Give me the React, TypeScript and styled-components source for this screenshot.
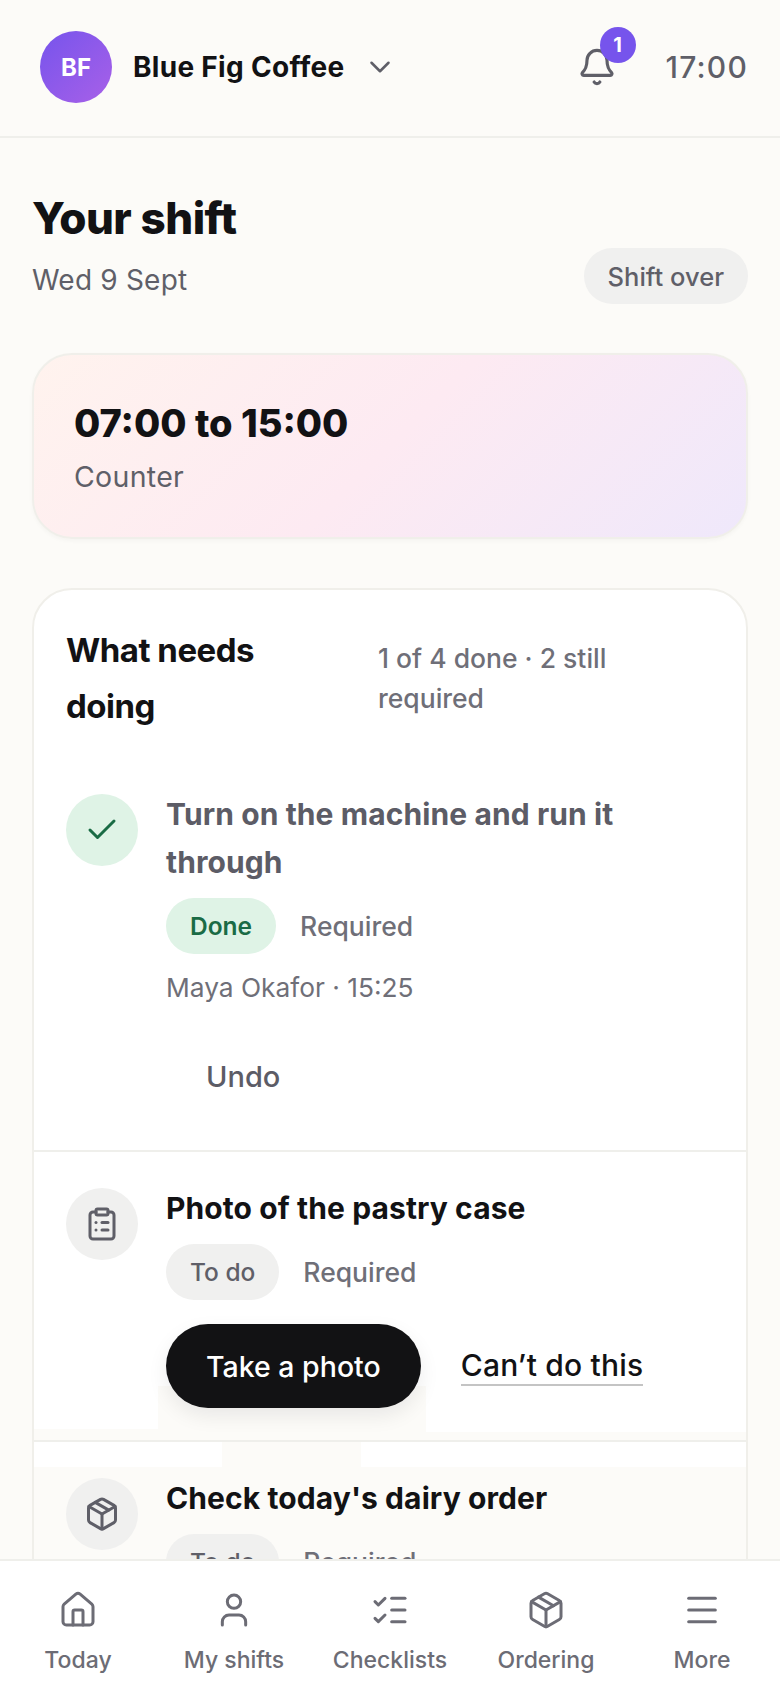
import React from 'react';
import styled, { createGlobalStyle } from 'styled-components';
import { Bell, Check, ChevronDown, ClipboardList, House, ListChecks, Menu, Package, User } from 'lucide-react';

const GlobalStyle = createGlobalStyle`
  html, body {
    margin: 0;
    padding: 0;
    background: #fcfbf8;
  }
  * {
    box-sizing: border-box;
  }
  body {
    font-family: Inter, "Noto Sans", sans-serif;
    color: #121214;
  }
`;

const Shell = styled.div`
  display: flex;
  flex-direction: column;
  height: 100vh;
  overflow: hidden;
  background: #fcfbf8;
`;

const TopBar = styled.header`
  flex: none;
  display: flex;
  align-items: center;
  height: 138px;
  padding: 0 32px 2px 40px;
  border-bottom: 2px solid #efefeb;
`;

const Avatar = styled.div`
  width: 72px;
  height: 72px;
  border-radius: 50%;
  display: flex;
  align-items: center;
  justify-content: center;
  background: linear-gradient(135deg, #7654ec, #a860e8);
  color: #fff;
  font-size: 24px;
  font-weight: 700;
`;

const Business = styled.div`
  margin-left: 21px;
  font-size: 28px;
  font-weight: 700;
  letter-spacing: 0.3px;
`;

const Caret = styled(ChevronDown)`
  margin-left: 19px;
  color: #5f5f68;
`;

const BellWrap = styled.div`
  position: relative;
  margin-left: auto;
  width: 40px;
  height: 40px;
  color: #5f5f68;
`;

const Badge = styled.span`
  position: absolute;
  top: -20px;
  left: 23px;
  width: 36px;
  height: 36px;
  border-radius: 50%;
  display: flex;
  align-items: center;
  justify-content: center;
  background: #7654ec;
  color: #fff;
  font-size: 20px;
  font-weight: 700;
`;

const Clock = styled.div`
  margin-left: 49px;
  color: #5f5f68;
  font-size: 30px;
  font-weight: 500;
  letter-spacing: 1.2px;
`;

const Main = styled.main`
  flex: 1;
  min-height: 0;
  overflow: hidden;
  padding: 52px 32px 0;
`;

const PageHead = styled.div`
  display: flex;
  align-items: flex-end;
  justify-content: space-between;
`;

const PageTitle = styled.h1`
  margin: 0;
  font-size: 44px;
  line-height: 56px;
  font-weight: 800;
  letter-spacing: -0.5px;
`;

const PageDate = styled.div`
  margin: 14px 0 4px;
  font-size: 28px;
  line-height: 40px;
  letter-spacing: 0.2px;
  color: #5f5f68;
`;

const Pill = styled.button`
  height: 56px;
  padding: 0 24px;
  border: 0;
  border-radius: 28px;
  background: #f0f0ef;
  color: #5f5f68;
  font: 500 25.5px Inter, sans-serif;
`;

const ShiftCard = styled.section`
  margin-top: 49px;
  height: 186px;
  padding: 44px 40px 0;
  border: 2px solid #f0efea;
  border-radius: 40px;
  background: linear-gradient(135deg, #fff3ee 0%, #fdeaf2 50%, #efe8fb 100%);
  box-shadow: 0 2px 4px rgba(18, 18, 20, 0.03);
`;

const ShiftTime = styled.div`
  font-size: 38px;
  line-height: 48px;
  font-weight: 800;
`;

const ShiftRole = styled.div`
  margin-top: 10px;
  font-size: 28.5px;
  line-height: 40px;
  letter-spacing: 0.3px;
  color: #5f5f68;
`;

const TaskCard = styled.section`
  margin-top: 49px;
  border: 2px solid #f0efea;
  border-radius: 40px;
  background: #fff;
  overflow: hidden;
`;

const TaskHead = styled.div`
  display: grid;
  grid-template-columns: 312px 1fr;
  align-items: center;
  padding: 32px 32px 24px;
`;

const TaskHeading = styled.h2`
  margin: 0;
  max-width: 230px;
  font-size: 33px;
  line-height: 56px;
  font-weight: 700;
  letter-spacing: -0.5px;
`;

const TaskNote = styled.div`
  max-width: 300px;
  font-size: 26.5px;
  line-height: 40px;
  font-weight: 500;
  color: #6f6f78;
`;

const Row = styled.div`
  display: flex;
  align-items: flex-start;
  gap: 28px;
  padding: 32px;
`;

// the row sits on the page tone in the capture, with a strip of white left along its top edge
const TailRow = styled(Row)`
  background-color: #fcfbf8;
  background-image: linear-gradient(#fff, #fff), linear-gradient(#fff, #fff);
  background-size: 188px 25px, 385px 25px;
  background-position: left top, right top;
  background-repeat: no-repeat;
`;

const PhotoRow = styled(Row)`
  background-color: #fff;
  background-image:
    linear-gradient(#fcfbf8, #fcfbf8),
    linear-gradient(#fcfbf8, #fcfbf8),
    linear-gradient(#fcfbf8, #fcfbf8);
  background-size: 268px 54px, 124px 11px, 320px 8px;
  background-position: 124px bottom, left bottom, right bottom;
  background-repeat: no-repeat;
`;

const Divider = styled.hr`
  margin: 0;
  height: 2px;
  border: 0;
  background: #efefeb;
`;

const IconDisc = styled.div<{ $done?: boolean }>`
  flex: none;
  width: 72px;
  height: 72px;
  margin-top: 4px;
  border-radius: 50%;
  display: flex;
  align-items: center;
  justify-content: center;
  background: ${p => (p.$done ? '#dff3e6' : '#f0f0ef')};
  color: ${p => (p.$done ? '#1a6b45' : '#5f5f68')};
`;

const RowBody = styled.div`
  flex: 1;
  min-width: 0;
`;

const RowTitle = styled.div<{ $done?: boolean }>`
  font-size: 30px;
  line-height: 48px;
  font-weight: 700;
  letter-spacing: 0.1px;
  color: ${p => (p.$done ? '#5c5c66' : '#121214')};
`;

const MetaLine = styled.div`
  display: flex;
  align-items: center;
  gap: 24px;
  margin-top: 12px;
`;

const Status = styled.span<{ $done?: boolean }>`
  display: flex;
  align-items: center;
  height: 56px;
  padding: 0 24px;
  border-radius: 28px;
  background: ${p => (p.$done ? '#dff3e6' : '#f0f0ef')};
  color: ${p => (p.$done ? '#1a6b45' : '#5f5f68')};
  font-size: 24.5px;
  font-weight: ${p => (p.$done ? 600 : 500)};
`;

const Required = styled.span`
  font-size: 26.5px;
  font-weight: 500;
  color: #6f6f78;
`;

const Signed = styled.div`
  margin-top: 14px;
  font-size: 26.3px;
  line-height: 40px;
  color: #6f6f78;
`;

const Actions = styled.div`
  display: flex;
  align-items: center;
  gap: 40px;
  margin-top: 24px;
`;

const PrimaryButton = styled.button`
  height: 84px;
  padding: 0 40px;
  border: 0;
  border-radius: 42px;
  background: #121214;
  color: #fff;
  font: 500 28.5px Inter, sans-serif;
  box-shadow: 0 8px 20px rgba(18, 18, 20, 0.08);
`;

const GhostButton = styled.button`
  display: block;
  height: 84px;
  margin-top: 26px;
  padding: 0 40px;
  border: 0;
  background: transparent;
  color: #5c5c66;
  font: 500 29px Inter, sans-serif;
`;

const TextLink = styled.a`
  padding-bottom: 1px;
  border-bottom: 2px solid #c4c4c4;
  color: #121214;
  font-size: 30px;
  font-weight: 500;
  letter-spacing: 0.2px;
`;

const BottomNav = styled.nav`
  flex: none;
  display: grid;
  grid-template-columns: repeat(5, 1fr);
  height: 129px;
  padding-top: 29px;
  border-top: 2px solid #efefeb;
  background: #fff;
`;

const NavItem = styled.div`
  display: flex;
  flex-direction: column;
  align-items: center;
  gap: 14px;
  color: #6c6c75;
  font-size: 23px;
  line-height: 32px;
  font-weight: 500;
`;

const navItems = [
  { label: 'Today', Icon: House },
  { label: 'My shifts', Icon: User },
  { label: 'Checklists', Icon: ListChecks },
  { label: 'Ordering', Icon: Package },
  { label: 'More', Icon: Menu },
];

export default function App() {
  return (
    <Shell>
      <GlobalStyle />
      <TopBar>
        <Avatar>BF</Avatar>
        <Business>Blue Fig Coffee</Business>
        <Caret size={34} strokeWidth={1.8} />
        <BellWrap>
          <Bell size={40} strokeWidth={1.9} />
          <Badge>1</Badge>
        </BellWrap>
        <Clock>17:00</Clock>
      </TopBar>

      <Main>
        <PageHead>
          <div>
            <PageTitle>Your shift</PageTitle>
            <PageDate>Wed 9 Sept</PageDate>
          </div>
          <Pill>Shift over</Pill>
        </PageHead>

        <ShiftCard>
          <ShiftTime>07:00 to 15:00</ShiftTime>
          <ShiftRole>Counter</ShiftRole>
        </ShiftCard>

        <TaskCard>
          <TaskHead>
            <TaskHeading>What needs doing</TaskHeading>
            <TaskNote>1 of 4 done · 2 still required</TaskNote>
          </TaskHead>

          <Row>
            <IconDisc $done>
              <Check size={36} strokeWidth={2} />
            </IconDisc>
            <RowBody>
              <RowTitle $done>Turn on the machine and run it through</RowTitle>
              <MetaLine>
                <Status $done>Done</Status>
                <Required>Required</Required>
              </MetaLine>
              <Signed>Maya Okafor · 15:25</Signed>
              <GhostButton>Undo</GhostButton>
            </RowBody>
          </Row>
          <Divider />

          <PhotoRow>
            <IconDisc>
              <ClipboardList size={36} strokeWidth={2} />
            </IconDisc>
            <RowBody>
              <RowTitle>Photo of the pastry case</RowTitle>
              <MetaLine>
                <Status>To do</Status>
                <Required>Required</Required>
              </MetaLine>
              <Actions>
                <PrimaryButton>Take a photo</PrimaryButton>
                <TextLink>Can’t do this</TextLink>
              </Actions>
            </RowBody>
          </PhotoRow>
          <Divider />

          <TailRow>
            <IconDisc>
              <Package size={36} strokeWidth={2} />
            </IconDisc>
            <RowBody>
              <RowTitle>Check today's dairy order</RowTitle>
              <MetaLine>
                <Status>To do</Status>
                <Required>Required</Required>
              </MetaLine>
            </RowBody>
          </TailRow>
        </TaskCard>
      </Main>

      <BottomNav>
        {navItems.map(({ label, Icon }) => (
          <NavItem key={label}>
            <Icon size={40} strokeWidth={1.8} />
            {label}
          </NavItem>
        ))}
      </BottomNav>
    </Shell>
  );
}
